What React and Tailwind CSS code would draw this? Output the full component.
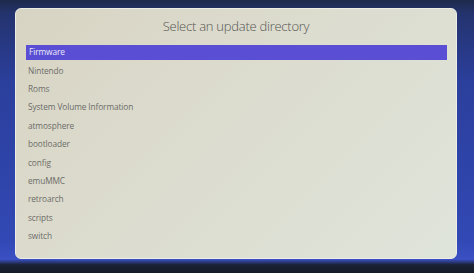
const dirs = [
  'Firmware',
  'Nintendo',
  'Roms',
  'System Volume Information',
  'atmosphere',
  'bootloader',
  'config',
  'emuMMC',
  'retroarch',
  'scripts',
  'switch',
]

export default function App() {
  return (
    <div
      className="w-[474px] h-[273px] overflow-hidden pt-[8px] pl-[15px] bg-[linear-gradient(to_bottom,#1e2a4a_0%,#24336e_5%,#2b3f9c_30%,#3248b4_88%,#3a50c4_95%,#1b2235_97%,#141a28_100%)]"
      style={{ fontFamily: '"Open Sans", "Liberation Sans", sans-serif' }}
    >
      <div className="w-[442px] h-[251px] rounded-[6px] border border-[#eceee6] bg-[linear-gradient(135deg,#d8d4c3_0%,#dcdccf_45%,#dfe4da_100%)] flex flex-col">
        <div className="h-[33px] flex items-center justify-center text-[13px] tracking-[-0.25px] font-light text-[#555553] pt-[2px]">
          Select an update directory
        </div>
        <div className="flex flex-col pl-[10px] pr-[9px] mt-[1.5px]">
          {dirs.map((d, i) => (
            <div key={d} className="h-[18.35px] flex items-center">
              <div
                className={
                  i === 0
                    ? 'h-[15px] w-full flex items-center pl-[3px] bg-[#5a4fd4] text-[#ecebf7] text-[8.3px] tracking-[-0.1px]'
                    : 'h-[15px] w-full flex items-center pl-[2px] text-[#6c6c68] text-[8.3px] tracking-[-0.1px]'
                }
              >
                {d}
              </div>
            </div>
          ))}
        </div>
      </div>
    </div>
  )
}
